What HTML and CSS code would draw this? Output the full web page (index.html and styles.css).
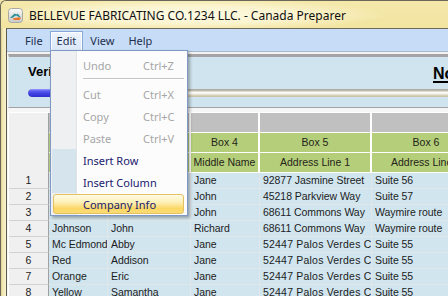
FILE: index.html
```html
<!DOCTYPE html>
<html>
<head>
<meta charset="utf-8">
<link rel="stylesheet" href="styles.css">
</head>
<body>
<div class="window">
  <div class="titlebar">
    <svg class="app-icon" width="15" height="15" viewBox="0 0 15 15">
      <defs>
        <linearGradient id="ig" x1="0" y1="0" x2="0" y2="1">
          <stop offset="0" stop-color="#fbfbfb"/>
          <stop offset="1" stop-color="#c9c9c9"/>
        </linearGradient>
      </defs>
      <rect x="0.5" y="0.5" width="14" height="14" rx="3" fill="url(#ig)" stroke="#a9a9a0"/>
      <polygon points="2,10 6.5,5.5 8.5,6.5 9.5,5.5 13,9.5 11,9 8,7.5 4,10" fill="#2a8f96"/>
      <polygon points="4.5,10.5 11,9.3 13,10 11.5,12 6,12" fill="#e8762a"/>
    </svg>
    <span class="title">BELLEVUE FABRICATING CO.1234 LLC. - Canada Preparer</span>
  </div>
  <div class="client">
    <nav class="menubar">
      <span class="mitem">File</span>
      <span class="mitem open">Edit</span>
      <span class="mitem">View</span>
      <span class="mitem">Help</span>
    </nav>
    <div class="menusep"></div>
    <div class="panel">
      <div class="status-row">
        <span class="status">Verifying</span>
        <span class="notice">Not Saved</span>
      </div>
      <div class="progress"><div class="progress-fill" style="width:40px"></div></div>
    </div>
    <div class="grid">
      <div class="rh"></div><div class="hg"></div><div class="hg"></div><div class="hg"></div><div class="hg"></div><div class="hg"></div>
      <div class="rh"></div><div class="hb"></div><div class="hb"></div><div class="hb">Box 4</div><div class="hb">Box 5</div><div class="hb">Box 6</div>
      <div class="rh"></div><div class="hb"></div><div class="hb"></div><div class="hb">Middle Name</div><div class="hb">Address Line 1</div><div class="hb">Address Line 2</div>

      <div class="rn">1</div><div class="c"></div><div class="c"></div><div class="c">Jane</div><div class="c">92877 Jasmine Street</div><div class="c">Suite 56</div>
      <div class="rn">2</div><div class="c"></div><div class="c"></div><div class="c">John</div><div class="c">45218 Parkview Way</div><div class="c">Suite 57</div>
      <div class="rn">3</div><div class="c"></div><div class="c"></div><div class="c">John</div><div class="c">68611 Commons Way</div><div class="c">Waymire route</div>
      <div class="rn">4</div><div class="c">Johnson</div><div class="c">John</div><div class="c">Richard</div><div class="c">68611 Commons Way</div><div class="c">Waymire route</div>
      <div class="rn">5</div><div class="c">Mc Edmond</div><div class="c">Abby</div><div class="c">Jane</div><div class="c addr">52447 Palos Verdes C</div><div class="c">Suite 55</div>
      <div class="rn">6</div><div class="c">Red</div><div class="c">Addison</div><div class="c">Jane</div><div class="c addr">52447 Palos Verdes C</div><div class="c">Suite 55</div>
      <div class="rn">7</div><div class="c">Orange</div><div class="c">Eric</div><div class="c">Jane</div><div class="c addr">52447 Palos Verdes C</div><div class="c">Suite 55</div>
      <div class="rn">8</div><div class="c">Yellow</div><div class="c">Samantha</div><div class="c">Jane</div><div class="c addr">52447 Palos Verdes C</div><div class="c">Suite 55</div>
    </div>
  </div>

  <div class="dropdown">
    <div class="mi disabled"><span>Undo</span><span>Ctrl+Z</span></div>
    <div class="msep"></div>
    <div class="mi disabled"><span>Cut</span><span>Ctrl+X</span></div>
    <div class="mi disabled"><span>Copy</span><span>Ctrl+C</span></div>
    <div class="mi disabled"><span>Paste</span><span>Ctrl+V</span></div>
    <div class="mi enabled"><span>Insert Row</span><span></span></div>
    <div class="mi enabled"><span>Insert Column</span><span></span></div>
    <div class="mi enabled hover"><span>Company Info</span><span></span></div>
  </div>
</div>
</body>
</html>
```

FILE: styles.css
```css
html, body {
  margin: 0;
  padding: 0;
}
body {
  width: 448px;
  height: 296px;
  overflow: hidden;
  background: #f1e4a2;
}
.window {
  position: relative;
  width: 448px;
  height: 296px;
  box-sizing: border-box;
  overflow: hidden;
  border-top: 1px solid #6b685a;
  border-left: 1px solid #6b685a;
  border-top-left-radius: 6px;
  background:
    linear-gradient(to right, #d6c983 0, #efe4ad 1px, #f6efcb 4px, #f3e9b8 6px),
    #f1e4a2;
  display: flex;
  flex-direction: column;
}
.titlebar {
  height: 27px;
  flex: 0 0 27px;
  display: flex;
  align-items: center;
  padding-left: 7px;
  background:
    radial-gradient(ellipse 200px 16px at 185px 14px, rgba(255, 252, 232, 0.95) 0, rgba(255, 250, 225, 0.7) 55%, rgba(255, 250, 225, 0) 100%),
    linear-gradient(#f4e8ab, #f2e4a0);
  border-top-left-radius: 5px;
}
.app-icon {
  display: block;
  margin-top: 1px;
}
.title {
  margin-left: 6px;
  font-family: "Noto Sans", "Open Sans", sans-serif;
  font-size: 12px;
  color: #111;
  white-space: nowrap;
  margin-top: 1px;
}
.client {
  flex: 1;
  margin-left: 5px;
  border-left: 1px solid #5d5b50;
  border-top: 1px solid #6e6b5c;
  background: #f6f6f6;
  display: flex;
  flex-direction: column;
  min-width: 0;
}
.menubar {
  height: 22px;
  flex: 0 0 22px;
  background: #c6dcf7;
  display: flex;
  padding-left: 11px;
  font-family: "Noto Sans", "Open Sans", sans-serif;
  font-size: 11px;
  color: #1e2f4d;
}
.mitem {
  box-sizing: border-box;
  height: 20px;
  margin-top: 2px;
  padding: 0 6px;
  line-height: 18px;
  border: 1px solid transparent;
  border-bottom: none;
}
.mitem.open {
  border-color: #8aa7d3;
  background: linear-gradient(#eef4fc, #dae7f8);
  box-shadow: inset 1px 1px 0 #fff, inset -1px 0 0 #fff;
}
.menusep {
  height: 3px;
  flex: 0 0 3px;
  background: linear-gradient(#a9b9cc 0, #a9b9cc 1px, #f3f3f3 1px);
}
.panel {
  margin-left: 1px;
  background: #cfe4ee;
  border-top: 3px solid #a4a4a4;
  border-left: 1px solid #e4ecf0;
  border-bottom: 1px solid #a3a3a3;
  height: 50px;
  box-sizing: content-box;
  overflow: hidden;
  font-family: "Liberation Sans", Arial, sans-serif;
}
.status-row {
  display: flex;
  align-items: flex-start;
  margin-top: 7px;
  height: 19px;
  white-space: nowrap;
}
.status {
  flex: 0 0 424px;
  box-sizing: border-box;
  padding-left: 19px;
  font-size: 13px;
  line-height: 16px;
  font-weight: bold;
  color: #000;
}
.notice {
  font-size: 16px;
  line-height: 19px;
  font-weight: bold;
  color: #000;
  text-decoration: underline;
  text-decoration-thickness: 2px;
  text-underline-offset: 2px;
}
.progress {
  margin-top: 6px;
  margin-left: 19px;
  width: 600px;
  height: 8px;
  border-radius: 4px;
  background: linear-gradient(#aaa79b 0, #c3c0b4 2px, #f7f7f2 3px, #ffffff 4px, #dcd5bf 6px, #c6bea4 8px);
  overflow: hidden;
}
.progress-fill {
  height: 8px;
  border-radius: 4px;
  background: linear-gradient(#9a9cff 0, #5a5cf0 2px, #3c3ee0 5px, #2f30cc 8px);
}
.grid {
  margin-top: 4px;
  margin-left: 1px;
  border-top: 1px solid #ffffff;
  border-left: 1px solid #ffffff;
  display: grid;
  grid-template-columns: 40px 59px 83px 69px 112px 110px;
  grid-template-rows: 20px 20px 20px;
  grid-auto-rows: 16px;
  font-family: "Liberation Sans", Arial, sans-serif;
  font-size: 10.5px;
  color: #1c1c1c;
  background: #f0f0f0;
}
.grid > div {
  box-sizing: border-box;
  white-space: nowrap;
  overflow: hidden;
}
.rh {
  background: #f0f0f0;
  border-right: 1px solid #a0a0a0;
}
.hg {
  background: #c0c0c0;
  border-right: 2px solid #ffffff;
  border-bottom: 1px solid #ffffff;
}
.hb {
  background: #b5ce79;
  border-right: 2px solid #ffffff;
  border-bottom: 1px solid #ffffff;
  text-align: center;
  line-height: 19px;
  color: #24241a;
}
.rn {
  background: #f0f0f0;
  border-right: 1px solid #a0a0a0;
  border-bottom: 1px solid #d2d2d2;
  text-align: center;
  line-height: 15px;
}
.c {
  background: #d1e5ef;
  border-right: 1px solid #e3e6e8;
  border-bottom: 1px solid #e3e6e8;
  padding-left: 3px;
  line-height: 15px;
  letter-spacing: -0.05px;
}
.c.addr {
  letter-spacing: 0.2px;
}
.dropdown {
  position: absolute;
  left: 49px;
  top: 49px;
  width: 138px;
  box-sizing: border-box;
  border: 1px solid #8098c4;
  padding: 3px 1px 0 1px;
  background: linear-gradient(to right, #eef0f2 0, #eef0f2 25px, #e0e3e6 25px, #e0e3e6 26px, #ffffff 26px, #ffffff 27px, #fcfcfc 27px);
  box-shadow: 2px 2px 3px rgba(0, 0, 0, 0.3);
  font-family: "Noto Sans", "Open Sans", sans-serif;
  font-size: 11px;
}
.mi {
  box-sizing: border-box;
  height: 22px;
  display: grid;
  grid-template-columns: 60px auto;
  align-items: center;
  padding-left: 31px;
  white-space: nowrap;
}
.mi.disabled {
  color: #a6a6a6;
}
.mi.enabled {
  color: #202070;
  background: linear-gradient(to right, #d6e4ee 0, #d6e4ee 24px, transparent 24px);
}
.mi.hover {
  height: 20px;
  margin: 1px 2px 1px 1px;
  padding-left: 29px;
  border: 1px solid #e3c062;
  border-radius: 3px;
  background: linear-gradient(#fefbe4 0, #fdf0b8 40%, #fbd765 75%, #fbdb74 100%);
}
.msep {
  height: 7px;
  margin-left: 31px;
  margin-right: 2px;
  background: linear-gradient(transparent 2px, #c6c6c6 2px, #c6c6c6 3px, #ffffff 3px, #ffffff 4px, transparent 4px);
}
```
